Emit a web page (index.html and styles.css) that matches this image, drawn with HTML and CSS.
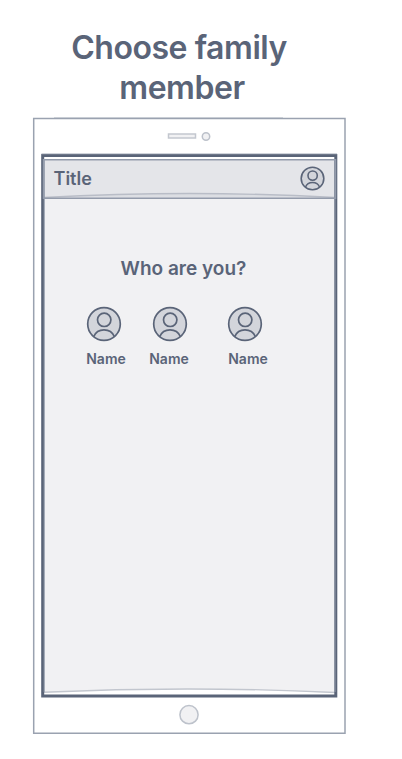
FILE: index.html
```html
<!DOCTYPE html>
<html lang="en">
<head>
<meta charset="utf-8">
<title>Choose family member</title>
<link rel="stylesheet" href="styles.css">
</head>
<body>
<svg class="defs" width="0" height="0" aria-hidden="true">
  <symbol id="person" viewBox="0 0 36 36">
    <circle cx="18" cy="18" r="16.3" fill="#d3d5db"/>
    <circle cx="18.200" cy="13.800" r="6.700"/>
    <path d="M7.800 30.500C9.600 26 13.300 23.800 18 23.800S26.500 26 28.300 30.500"/>
  </symbol>
</svg>
<h1 class="heading"><span class="line-one">Choose family</span><span class="line-two">member</span></h1>
<main class="phone">
  <svg class="sketch" width="316" height="620" viewBox="32 116 316 620" fill="none" aria-hidden="true">
    <path d="M54 117.500H283" stroke="#d9dce2"/>
    <path d="M33.700 118.500H345V733.300H33.700Z" stroke="#9aa2b0" stroke-width="1.500"/>
    <rect x="168.500" y="134" width="27" height="4" fill="#f1f1f3" stroke="#c3c7cf" stroke-width="1.500"/>
    <circle cx="206" cy="136.500" r="3.700" fill="#f1f1f3" stroke="#bcc1ca" stroke-width="1.500"/>
    <path d="M43.500 159H335.500V693Q190 685.500 43.500 692.300Z" fill="#f1f1f3"/>
    <path d="M43.500 159.500H335.500V198.500H43.500Z" fill="#e4e5e9"/>
    <path d="M44 197.500Q190 189.500 335 197.500" fill="#dcdee3" stroke="#b9bdc7" stroke-width="1.400"/>
    <path d="M43.500 692.300Q190 685.500 335.500 692.500" stroke="#c2c6ce" stroke-width="1.400"/>
    <path d="M42.700 155.500H335.800V696H42.700Z" stroke="#5a6478" stroke-width="3"/>
    <path d="M41.500 153.700H337" stroke="#c5cad3"/>
    <path d="M44.200 159.500V692M335 159.500V692" stroke="#929aaa"/>
    <path d="M43.500 159.800H335.500V198.300H43.500Z" stroke="#939bab" stroke-width="1.500"/>
    <circle cx="189" cy="714.700" r="9.100" fill="#f1f1f3" stroke="#bdc2cb" stroke-width="1.500"/>
  </svg>
  <header class="bar">
    <h2 class="title">Title</h2>
    <svg class="icon small"><use href="#person"/></svg>
  </header>
  <section class="picker">
    <h3 class="question">Who are you?</h3>
    <div class="members">
      <div class="member"><svg class="icon"><use href="#person"/></svg><span>Name</span></div>
      <div class="member second"><svg class="icon"><use href="#person"/></svg><span>Name</span></div>
      <div class="member third"><svg class="icon"><use href="#person"/></svg><span>Name</span></div>
    </div>
  </section>
</main>
</body>
</html>
```
FILE: styles.css
```css
* { box-sizing: border-box; }
body {
  width: 402px;
  height: 759px;
  margin: 0;
  padding-top: 28px;
  overflow: hidden;
  background: #fff;
  color: #5a6478;
  font-family: Inter, "Liberation Sans", sans-serif;
}
h1, h2, h3 { margin: 0; font-weight: 600; }
.defs { position: absolute; }
.heading { width: 364px; font-size: 32px; line-height: 40px; letter-spacing: -0.45px; text-align: center; }
.heading span { display: block; }
.line-one { margin-right: 6px; }
.phone { position: relative; width: 313px; height: 616px; margin: 10px 0 0 33px; }
.sketch { position: absolute; left: -1px; top: -2px; z-index: -1; }
.bar {
  display: flex;
  align-items: center;
  justify-content: space-between;
  padding: 41px 21.5px 0 20.5px;
  height: 80px;
}
.title { padding-top: 1px; font-size: 18px; line-height: 24px; }
.icon {
  display: block;
  width: 36px;
  height: 36px;
  fill: none;
  stroke: #5a6478;
  stroke-width: 1.7;
}
.small { width: 25px; height: 25px; stroke-width: 2.3; }
.question { margin: 59px 12px 0 0; font-size: 19px; line-height: 24px; text-align: center; }
.members { display: flex; margin: 25px 0 0 51px; }
.member { width: 44px; font-size: 14px; font-weight: 600; line-height: 18px; }
.member span { display: block; margin-top: 8px; text-align: center; }
.member .icon { margin-left: 2px; }
.second { margin-left: 19px; }
.second .icon { margin-left: 5px; }
.third { margin-left: 35px; }
.third .icon { margin-left: 1px; }
```
